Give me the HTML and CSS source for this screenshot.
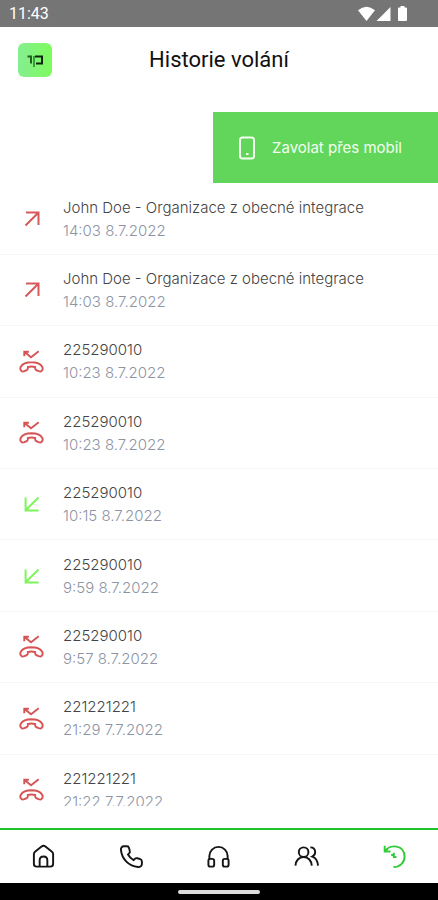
FILE: index.html
```html
<!DOCTYPE html>
<html lang="cs">
<head>
<meta charset="utf-8">
<meta name="viewport" content="width=device-width, initial-scale=1">
<title>Historie volání</title>
<link rel="stylesheet" href="styles.css">
</head>
<body>
<svg class="sprite" aria-hidden="true">
  <symbol id="outgoing" viewBox="0 0 24 24"><path d="M5.5 18.5 18.3 5.8M6 5.6h12.5V18"/></symbol>
  <symbol id="incoming" viewBox="0 0 24 24"><path d="M18.5 5.5 5.7 18.2M5.6 5.5v12.9h13"/></symbol>
  <symbol id="missed" viewBox="0 0 26 26">
    <path d="M5.500 7.500V2.800h4.800M5.800 3l6.700 5.500L20.500 2.400"/>
    <path d="M13 13.700c-5.500 0-9.500 1.900-11.100 4.800-.7 1.400-.5 3.300.5 4.200.8.8 2 .7 3.100.3l2.300-.9c1-.4 1.400-1.200 1.400-2.200v-1.200c2.400-.7 5.200-.7 7.600 0v1.200c0 1 .4 1.800 1.400 2.200l2.300.9c1.100.4 2.300.5 3.100-.3 1-.9 1.200-2.800.5-4.200-1.600-2.900-5.600-4.800-11.100-4.800z"/>
  </symbol>
</svg>
<div class="app">
  <div class="status">
    <span>11:43</span>
    <svg width="50" height="16" viewBox="0 0 50 16" fill="#fff" aria-hidden="true">
      <path d="M0 4.200Q8.500-2.800 17 4.200L8.500 15z"/>
      <path d="M18.500 15 32.500 1v14z"/>
      <path d="M42.500 0h4v1.500H48q1 0 1 1V14q0 1-1 1h-7q-1 0-1-1V2.500q0-1 1-1h1.500z"/>
    </svg>
  </div>
  <header class="header">
    <svg class="logo" viewBox="0 0 34 34" role="img" aria-label="Logo">
      <defs><linearGradient id="lg" x1="0" x2="1"><stop offset="0" stop-color="#85ee91"/><stop offset="1" stop-color="#7dfb5c"/></linearGradient></defs>
      <rect width="34" height="34" rx="6" fill="url(#lg)"/>
      <g fill="none" stroke-width="2">
        <path d="M9.500 13.500H13v7" stroke="#245c28"/>
        <path d="M16 13v11" stroke="#3f9a3b"/>
        <path d="M17 13.500h7v7h-6" stroke="#10240f"/>
      </g>
    </svg>
    <h1 class="title">Historie volání</h1>
  </header>
  <main class="history">
    <div class="swiped">
      <button class="call-mobile" type="button">
        <svg width="18" height="24" viewBox="0 0 18 24" fill="none" stroke="currentColor" stroke-width="2" aria-hidden="true"><rect x="2" y="1.500" width="14" height="21" rx="2.500"/><path d="M8 18h2.500"/></svg>
        <span>Zavolat přes mobil</span>
      </button>
    </div>
    <article class="call"><svg class="icon out"><use href="#outgoing"/></svg><div><p class="name">John Doe - Organizace z obecné integrace</p><p class="time">14:03 8.7.2022</p></div></article>
    <article class="call"><svg class="icon out"><use href="#outgoing"/></svg><div><p class="name">John Doe - Organizace z obecné integrace</p><p class="time">14:03 8.7.2022</p></div></article>
    <article class="call"><svg class="icon miss"><use href="#missed"/></svg><div><p class="name">225290010</p><p class="time">10:23 8.7.2022</p></div></article>
    <article class="call"><svg class="icon miss"><use href="#missed"/></svg><div><p class="name">225290010</p><p class="time">10:23 8.7.2022</p></div></article>
    <article class="call"><svg class="icon in"><use href="#incoming"/></svg><div><p class="name">225290010</p><p class="time">10:15 8.7.2022</p></div></article>
    <article class="call"><svg class="icon in"><use href="#incoming"/></svg><div><p class="name">225290010</p><p class="time">9:59 8.7.2022</p></div></article>
    <article class="call"><svg class="icon miss"><use href="#missed"/></svg><div><p class="name">225290010</p><p class="time">9:57 8.7.2022</p></div></article>
    <article class="call"><svg class="icon miss"><use href="#missed"/></svg><div><p class="name">221221221</p><p class="time">21:29 7.7.2022</p></div></article>
    <article class="call"><svg class="icon miss"><use href="#missed"/></svg><div><p class="name">221221221</p><p class="time">21:22 7.7.2022</p></div></article>
  </main>
  <nav class="tabs">
    <a href="#home" aria-label="Domů"><svg viewBox="0 0 26 26"><path d="M3 10.500Q3 9 4.200 8L11 2.600q2-1.500 4 0L21.800 8q1.200 1 1.200 2.500v10q0 3-3 3H6q-3 0-3-3z"/><path d="M9 23.500V17q0-4 4-4t4 4v6.500"/></svg></a>
    <a href="#calls" aria-label="Telefon"><svg viewBox="0 0 26 26"><path d="M8.300 2.300H5.200C3 2.300 1.800 4 2 6.200 2.900 15.800 10.300 23 19.800 24c2.300.2 4-1.200 4-3.200v-2.600c0-1.200-.6-2-1.700-2.400l-3-1c-1-.3-1.900-.1-2.600.6l-1.300 1.300c-2.700-1.400-4.400-3.100-5.800-5.800l1.200-1.200c.7-.7.9-1.600.6-2.600l-.8-3C10.100 2.900 9.400 2.300 8.300 2.300z"/></svg></a>
    <a href="#support" aria-label="Podpora"><svg viewBox="0 0 26 26"><path d="M3.500 16V12.500a9.500 9.500 0 0 1 19 0V16"/><rect x="2.500" y="15.500" width="6" height="8" rx="2"/><rect x="17.500" y="15.500" width="6" height="8" rx="2"/></svg></a>
    <a href="#contacts" aria-label="Kontakty"><svg viewBox="0 0 26 26"><circle cx="10" cy="8.500" r="5"/><path d="M1.500 22.500c.3-5 3.500-9 8.500-9s8.200 4 8.500 9M17 3.500c3 0 5 2 5 5 0 2.500-1.500 3.800-3 4.600 3 1 5.600 4.500 6 9.400"/></svg></a>
    <a class="active" href="#history" aria-label="Historie" aria-current="page"><svg viewBox="0 0 26 26"><path d="M2.800 1.800v6h6M3.500 7.200C8-.2 23.500.5 23.500 13.300c0 6-5 10.700-11.500 10.700"/><path d="M3 7.500 6 5M12.300 9v4.500h2.700M9.500 11.500h2"/></svg></a>
  </nav>
  <div class="gesture"><span></span></div>
</div>
</body>
</html>
```
FILE: styles.css
```css
* { box-sizing: border-box; }
body { margin: 0; background: #fff; color: #444; font-family: Inter, "Open Sans", sans-serif; font-size: 15px; }
p, h1 { margin: 0; }
.sprite { position: absolute; width: 0; height: 0; }
.app { display: flex; flex-direction: column; min-height: 100vh; }
.status { display: flex; align-items: center; justify-content: space-between; height: 27px; padding: 0 30px 0 9px; background: #757575; color: #fff; font: 16px/27px Roboto, sans-serif; }
.header { display: grid; grid-template-columns: 34px 1fr 34px; align-items: center; height: 85px; padding: 0 18px 20px; }
.logo { width: 34px; height: 34px; }
.title { color: #111; font: 400 22px/28px Roboto, sans-serif; text-align: center; }
.history { position: relative; flex: 1; display: grid; grid-auto-rows: minmax(70px, 1fr); margin-bottom: 2px; }
.history::after { content: ""; position: absolute; inset: auto 0 0; height: 20px; background: #fff; }
.swiped { display: flex; justify-content: flex-end; }
.call-mobile { display: flex; align-items: center; gap: 16px; min-width: 225px; padding: 0 25px; border: 0; background: #62d65a; color: #f2fff0; font: 400 15px/24px Inter, sans-serif; white-space: nowrap; }
.call { display: grid; grid-template-columns: 63px 1fr; align-items: center; border-bottom: 1px solid #f6f7f8; }
.icon { justify-self: center; width: 24px; height: 24px; fill: none; stroke-width: 2; }
.out { stroke: #d65a5c; }
.in { stroke: #7df558; }
.miss { width: 25px; height: 25px; stroke: #d55557; }
.name, .time { font-weight: 300; line-height: 23px; }
.name { color: #444; }
.time { color: #8d95a5; }
.tabs { display: grid; grid-template-columns: repeat(5, 1fr); align-items: center; height: 55px; border-top: 2px solid #1fc328; }
.tabs a { display: flex; justify-content: center; color: #151515; }
.tabs svg { width: 25px; height: 25px; fill: none; stroke: currentColor; stroke-width: 2; }
.tabs .active { color: #32cb38; }
.gesture { display: flex; align-items: center; justify-content: center; height: 17px; background: #000; }
.gesture span { width: 82px; height: 4px; border-radius: 2px; background: #ddd; }
```
